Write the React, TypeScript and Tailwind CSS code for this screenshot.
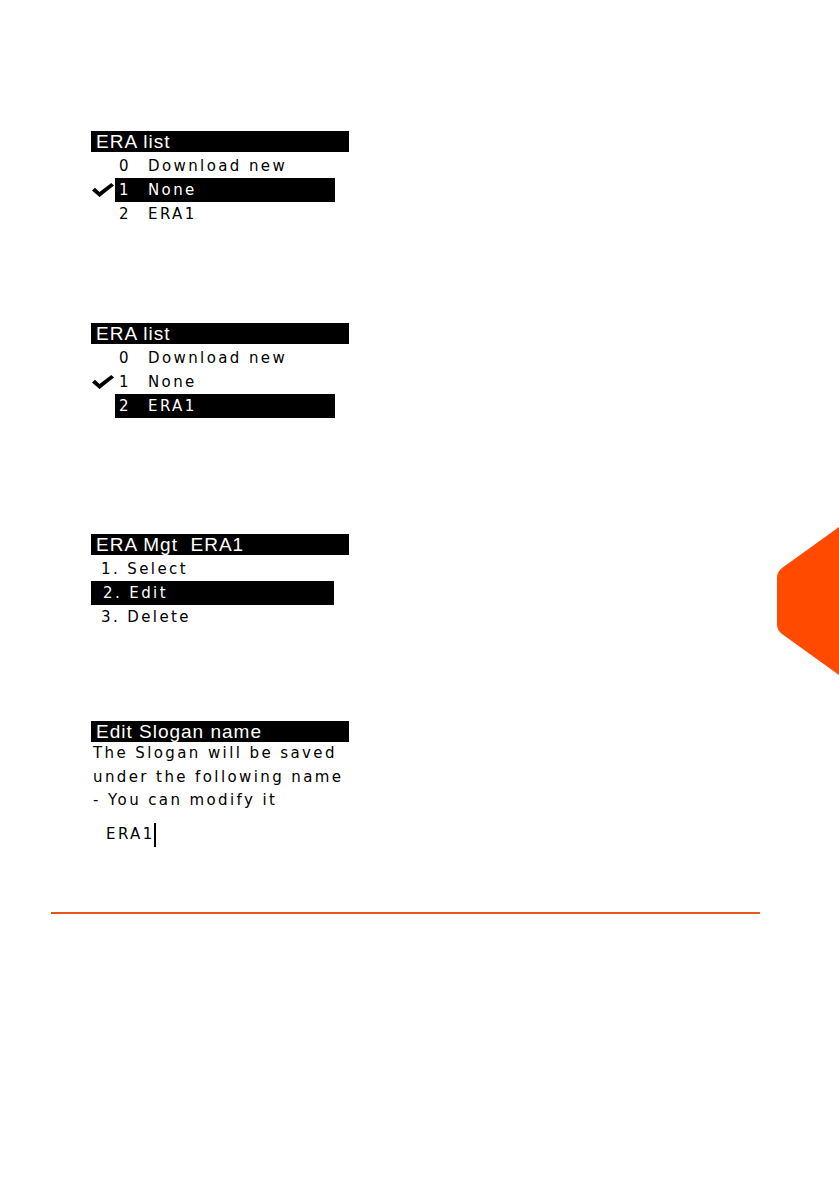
import React from "react";

const font = { fontFamily: '"Liberation Sans", Arial, sans-serif' };
const body = { fontFamily: '"DejaVu Sans", "Liberation Sans", sans-serif' };

function Check() {
  return (
    <svg width="22" height="14" viewBox="0 0 22 14">
      <polygon points="0,7.5 3,4.8 7.5,9 19.3,0 22,2.4 7.5,14" fill="#000" />
    </svg>
  );
}

function Header({ children }: { children: React.ReactNode }) {
  return (
    <div className="w-[258px] h-[21px] bg-black text-white pl-[5px] text-[19px] leading-[21px] tracking-[1px] whitespace-pre">
      {children}
    </div>
  );
}

function ListRow({ n, label, checked, selected }: { n: string; label: string; checked?: boolean; selected?: boolean }) {
  return (
    <div className="flex items-center h-[24px]">
      <div className="w-[24px] h-full flex items-center pl-[1px]">{checked ? <Check /> : null}</div>
      <div
        className={
          selected
            ? "w-[220px] h-full flex items-center pl-[4px] bg-black text-white"
            : "w-[220px] h-full flex items-center pl-[4px] text-black"
        }
      >
        <span className="w-[29px]">{n}</span>
        <span>{label}</span>
      </div>
    </div>
  );
}

function EraList({ sel }: { sel: number }) {
  return (
    <div>
      <Header>ERA list</Header>
      <div className="mt-[2px] text-[15px] tracking-[2.4px]" style={body}>
        <ListRow n="0" label="Download new" selected={sel === 0} />
        <ListRow n="1" label="None" checked selected={sel === 1} />
        <ListRow n="2" label="ERA1" selected={sel === 2} />
      </div>
    </div>
  );
}

function MgtRow({ label, selected }: { label: string; selected?: boolean }) {
  return (
    <div
      className={
        selected
          ? "w-[243px] h-[24px] flex items-center pl-[12px] bg-black text-white"
          : "w-[243px] h-[24px] flex items-center pl-[10px] text-black"
      }
    >
      {label}
    </div>
  );
}

export default function App() {
  return (
    <div className="relative w-[839px] h-[1191px] bg-white overflow-hidden text-black" style={font}>
      <div className="pl-[91px] pt-[131px]">
        <EraList sel={1} />
        <div className="mt-[97px]">
          <EraList sel={2} />
        </div>
        <div className="mt-[116px]">
          <Header>{"ERA Mgt  ERA1"}</Header>
          <div className="mt-[2px] text-[15px] tracking-[2.4px]" style={body}>
            <MgtRow label="1. Select" />
            <MgtRow label="2. Edit" selected />
            <MgtRow label="3. Delete" />
          </div>
        </div>
        <div className="mt-[92px]">
          <Header>Edit Slogan name</Header>
          <div style={body}>
            <div className="pl-[2px] text-[15px] leading-[23.5px] tracking-[2.4px]">
              <div>The Slogan will be saved</div>
              <div>under the following name</div>
              <div>- You can modify it</div>
            </div>
            <div className="mt-[10px] pl-[15px] h-[24px] flex items-center text-[15px] tracking-[2.4px]">
              <span>ERA1</span>
              <span className="inline-block w-[2px] h-[24px] bg-black -ml-[1px]"></span>
            </div>
          </div>
        </div>
      </div>
      <div className="ml-[51px] mt-[65px] w-[709px] h-[2px] bg-[#e9531d]"></div>
      <div className="absolute right-0 top-[527px]">
        <svg width="62" height="148" viewBox="0 0 62 148">
          <path d="M62 0 L5 41 Q0 45 0 51 L0 97 Q0 103 5 107 L62 148 Z" fill="#ff4a00" />
        </svg>
      </div>
    </div>
  );
}
